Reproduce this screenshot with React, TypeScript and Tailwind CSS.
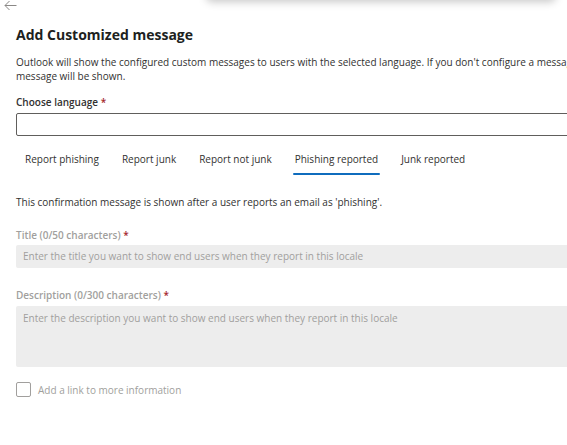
import React from "react";

const font = { fontFamily: '"Open Sans", "Noto Sans", sans-serif' };

export default function App() {
  const tabs = ["Report phishing", "Report junk", "Report not junk", "Phishing reported", "Junk reported"];
  return (
    <div className="relative w-[567px] h-[445px] overflow-hidden bg-white text-[#323130]" style={font}>
      <div className="absolute top-[-20px] left-[206px] w-[350px] h-[20px] rounded-md bg-white shadow-[0_2px_8px_rgba(0,0,0,0.22)]" />
      <div className="pl-[4px] h-[12px] flex items-start">
        <svg width="13" height="11" viewBox="0 0 13 11" fill="none" stroke="#8a8886" strokeWidth="1">
          <path d="M12.5 5.5H1M5.5 1L1 5.5L5.5 10" />
        </svg>
      </div>
      <div className="pl-[16px] w-[600px]">
        <h1 className="mt-[13px] text-[14px] font-bold leading-[20px] text-[#201f1e]">Add Customized message</h1>
        <p className="mt-[10px] text-[10px] leading-[14px]">
          <span className="block whitespace-nowrap">
            Outlook will show the configured custom messages to users with the selected language. If you don't configure a message for a language, the default
          </span>
          <span className="block">message will be shown.</span>
        </p>
        <div className="mt-[12px] text-[10px] leading-[14px] font-semibold">
          Choose language <span className="text-[#a4262c]">*</span>
        </div>
        <div className="mt-[4px] h-[23px] w-[570px] border border-[#605e5c] rounded-[2px]" />
        <div className="mt-[16px] flex">
          {tabs.map((t, i) => (
            <div key={t} className="relative px-[9px] mr-[5px] h-[23px] text-[10px] leading-[14px]">
              <span>{t}</span>
              {i === 3 && <div className="absolute left-[7px] right-[7px] bottom-0 h-[2px] bg-[#0f6cbd] rounded-full" />}
            </div>
          ))}
        </div>
        <p className="mt-[20px] text-[10px] leading-[14px]">This confirmation message is shown after a user reports an email as 'phishing'.</p>
        <div className="mt-[19px] text-[10px] leading-[14px] font-semibold text-[#a19f9d]">
          Title (0/50 characters) <span className="text-[#a4262c]">*</span>
        </div>
        <div className="mt-[3px] h-[23px] w-[570px] bg-[#ededed] rounded-[2px] flex items-center px-[7px] text-[10px] text-[#a19f9d]">
          Enter the title you want to show end users when they report in this locale
        </div>
        <div className="mt-[20px] text-[10px] leading-[14px] font-semibold text-[#a19f9d]">
          Description (0/300 characters) <span className="text-[#a4262c]">*</span>
        </div>
        <div className="mt-[4px] h-[61px] w-[570px] bg-[#ededed] rounded-[2px] px-[7px] pt-[5px] text-[10px] leading-[14px] text-[#a19f9d]">
          Enter the description you want to show end users when they report in this locale
        </div>
        <div className="mt-[15px] flex items-center gap-[7px]">
          <div className="w-[15px] h-[15px] border border-[#a19f9d] rounded-[2px]" />
          <span className="text-[10px] leading-[14px] text-[#a19f9d]">Add a link to more information</span>
        </div>
      </div>
    </div>
  );
}
